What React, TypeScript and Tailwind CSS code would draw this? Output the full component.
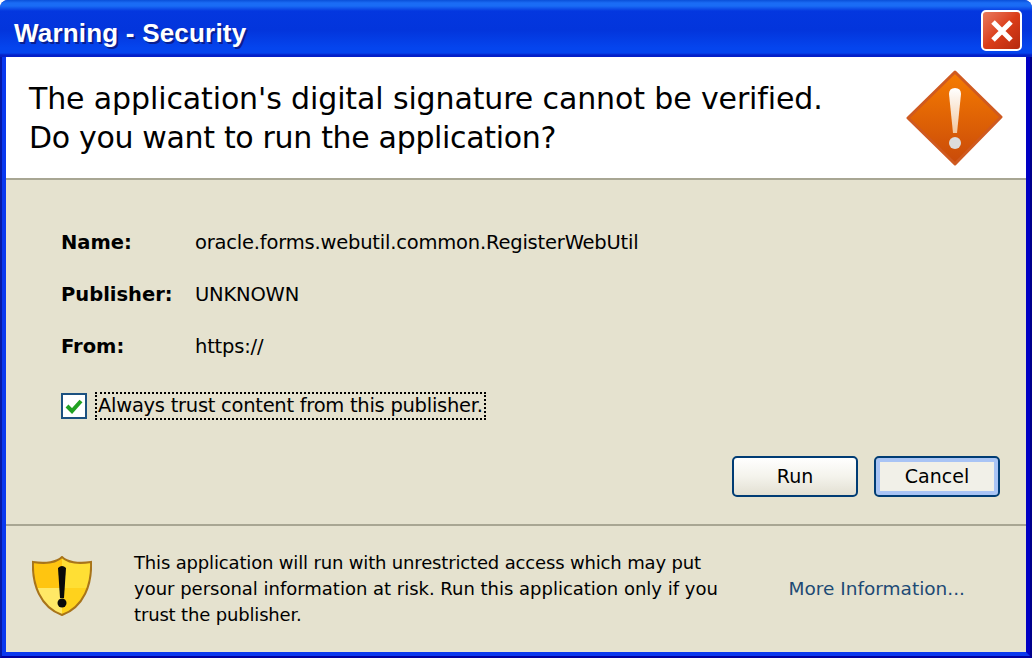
const ui = "[font-family:'DejaVu_Sans',Verdana,sans-serif]"

function Row({ label, value }: { label: string; value: string }) {
  return (
    <div className="flex h-[52px] items-center text-[19.5px] text-black">
      <span className="w-[134px] font-bold">{label}</span>
      <span className="tracking-[-0.2px]">{value}</span>
    </div>
  )
}

function DiamondIcon() {
  return (
    <svg width="98" height="98" viewBox="0 0 98 98" aria-hidden="true">
      <defs>
        <linearGradient id="dia" x1="0" y1="0" x2="0" y2="1">
          <stop offset="0" stopColor="#f67c00" />
          <stop offset="1" stopColor="#c94a0a" />
        </linearGradient>
        <linearGradient id="bang" x1="0" y1="0" x2="0" y2="1">
          <stop offset="0" stopColor="#ffffff" />
          <stop offset="1" stopColor="#f2c8a0" />
        </linearGradient>
      </defs>
      <path d="M49 3 L95 48 L49 95 L2 49 Z" fill="url(#dia)" stroke="#cf5a20" strokeWidth="3" strokeLinejoin="round" />
      <path d="M43 25 Q43 19 49 19 Q55 19 55 25 L51 64 H47 Z" fill="url(#bang)" />
      <circle cx="49" cy="74" r="6" fill="#dcdcdc" />
    </svg>
  )
}

function ShieldIcon() {
  const outline = 'M30 1 C35 6 46 8 59 6 C60 28 52 51 30 59 C8 51 0 28 1 6 C14 8 25 6 30 1 Z'
  return (
    <svg width="60" height="60" viewBox="0 0 60 60" aria-hidden="true">
      <defs>
        <clipPath id="shield">
          <path d={outline} />
        </clipPath>
      </defs>
      <g clipPath="url(#shield)">
        <rect x="0" y="0" width="30" height="32" fill="#ffc510" />
        <rect x="30" y="0" width="30" height="32" fill="#ffdf34" />
        <rect x="0" y="32" width="30" height="28" fill="#ffe866" />
        <rect x="30" y="32" width="30" height="28" fill="#ffd21c" />
      </g>
      <path d={outline} fill="none" stroke="#a8741a" strokeWidth="2" />
      <path d="M26 12 Q30 8 34 12 L32 42 H28 Z" fill="#0a0a0a" />
      <circle cx="30" cy="47" r="4.5" fill="#0a0a0a" />
    </svg>
  )
}

export default function App() {
  return (
    <div className={`${ui} h-[658px] w-[1034px] bg-white`}>
      <div className="flex h-[658px] w-[1032px] flex-col overflow-hidden rounded-t-[8px] bg-[#0831d9]">
        {/* title bar */}
        <div className="flex h-[57px] shrink-0 items-center justify-between bg-[linear-gradient(to_bottom,#0a4fd8_0px,#1a6cf5_3px,#1a6cf5_6px,#0437df_11px,#0335dc_30px,#0545ee_48px,#0545ee_53px,#0420c8_55px,#0420c8_57px)] pl-[14px] pr-[10px]">
          <span className="mt-[10px] font-['Liberation_Sans',sans-serif] text-[26px] font-bold tracking-[0.2px] text-white [text-shadow:2px_2px_0_#0a1f90]">Warning - Security</span>
          <button className="mt-[4px] flex h-[41px] w-[41px] items-center justify-center rounded-[5px] border-2 border-white bg-gradient-to-br from-[#e8795c] via-[#db3d18] to-[#b52a10]">
            <svg width="24" height="24" viewBox="0 0 24 24" aria-hidden="true">
              <path d="M3 3 L21 21 M21 3 L3 21" stroke="#fff" strokeWidth="5" />
            </svg>
          </button>
        </div>

        <div className="flex min-h-0 flex-1 flex-col border-x-2 border-b-2 border-b-[#0000a0] border-l-[#0418a8] border-r-[#00008b]">
          <div className="flex min-h-0 flex-1 flex-col border-x-4 border-b-4 border-b-[#0a38ee] border-l-[#0838f0] border-r-[#0000c4] bg-[#e5e2cf]">
            {/* header */}
            <div className="flex h-[123px] shrink-0 items-center justify-between border-b-2 border-[#a8a693] bg-white pl-[23px] pr-[22px]">
              <div className="pt-[2px] text-[30px] leading-[38.5px] text-black">
                <div className="tracking-[-0.12px]">The application's digital signature cannot be verified.</div>
                <div className="tracking-[-0.33px]">Do you want to run the application?</div>
              </div>
              <DiamondIcon />
            </div>

            {/* details */}
            <div className="flex min-h-0 flex-1 flex-col pl-[55px] pr-[26px] pt-[37px]">
              <Row label="Name:" value="oracle.forms.webutil.common.RegisterWebUtil" />
              <Row label="Publisher:" value="UNKNOWN" />
              <Row label="From:" value="https://" />
              <label className="mt-[19px] flex h-[28px] items-center text-[19.5px] tracking-[-0.27px] text-black">
                <span className="mr-[8px] flex h-[26px] w-[26px] items-center justify-center border-2 border-[#1c5180] bg-white">
                  <svg width="18" height="18" viewBox="0 0 18 18" aria-hidden="true">
                    <path d="M2 9 L7 14 L16 4" fill="none" stroke="#21a121" strokeWidth="4" />
                  </svg>
                </span>
                <span className="flex h-[28px] items-center border-2 border-dotted border-black px-[1px]">Always trust content from this publisher.</span>
              </label>
              <div className="mt-[36px] flex justify-end gap-[16px]">
                <button className="h-[41px] w-[126px] rounded-[5px] border-2 border-[#003c74] bg-gradient-to-b from-white via-[#f4f3ec] to-[#e3e0d3] text-[19px] text-black">Run</button>
                <button className="h-[41px] w-[126px] rounded-[5px] border-2 border-[#003c74] bg-[#f1f0e8] text-[19px] text-black shadow-[inset_0_0_0_4px_#a9c4f5]">Cancel</button>
              </div>
            </div>

            {/* footer */}
            <div className="flex h-[128px] shrink-0 items-center border-t-2 border-[#a8a693] pl-[26px] pr-[61px]">
              <span className="-mt-[6px]">
                <ShieldIcon />
              </span>
              <p className="ml-[42px] w-[600px] text-[18px] leading-[26px] tracking-[-0.16px] text-black">
                This application will run with unrestricted access which may put
                <span className="block tracking-[-0.01px]">your personal information at risk. Run this application only if you</span>
                trust the publisher.
              </p>
              <a className="ml-auto text-[18.5px] text-[#1d4a75]">More Information...</a>
            </div>
          </div>
        </div>
      </div>
    </div>
  )
}
